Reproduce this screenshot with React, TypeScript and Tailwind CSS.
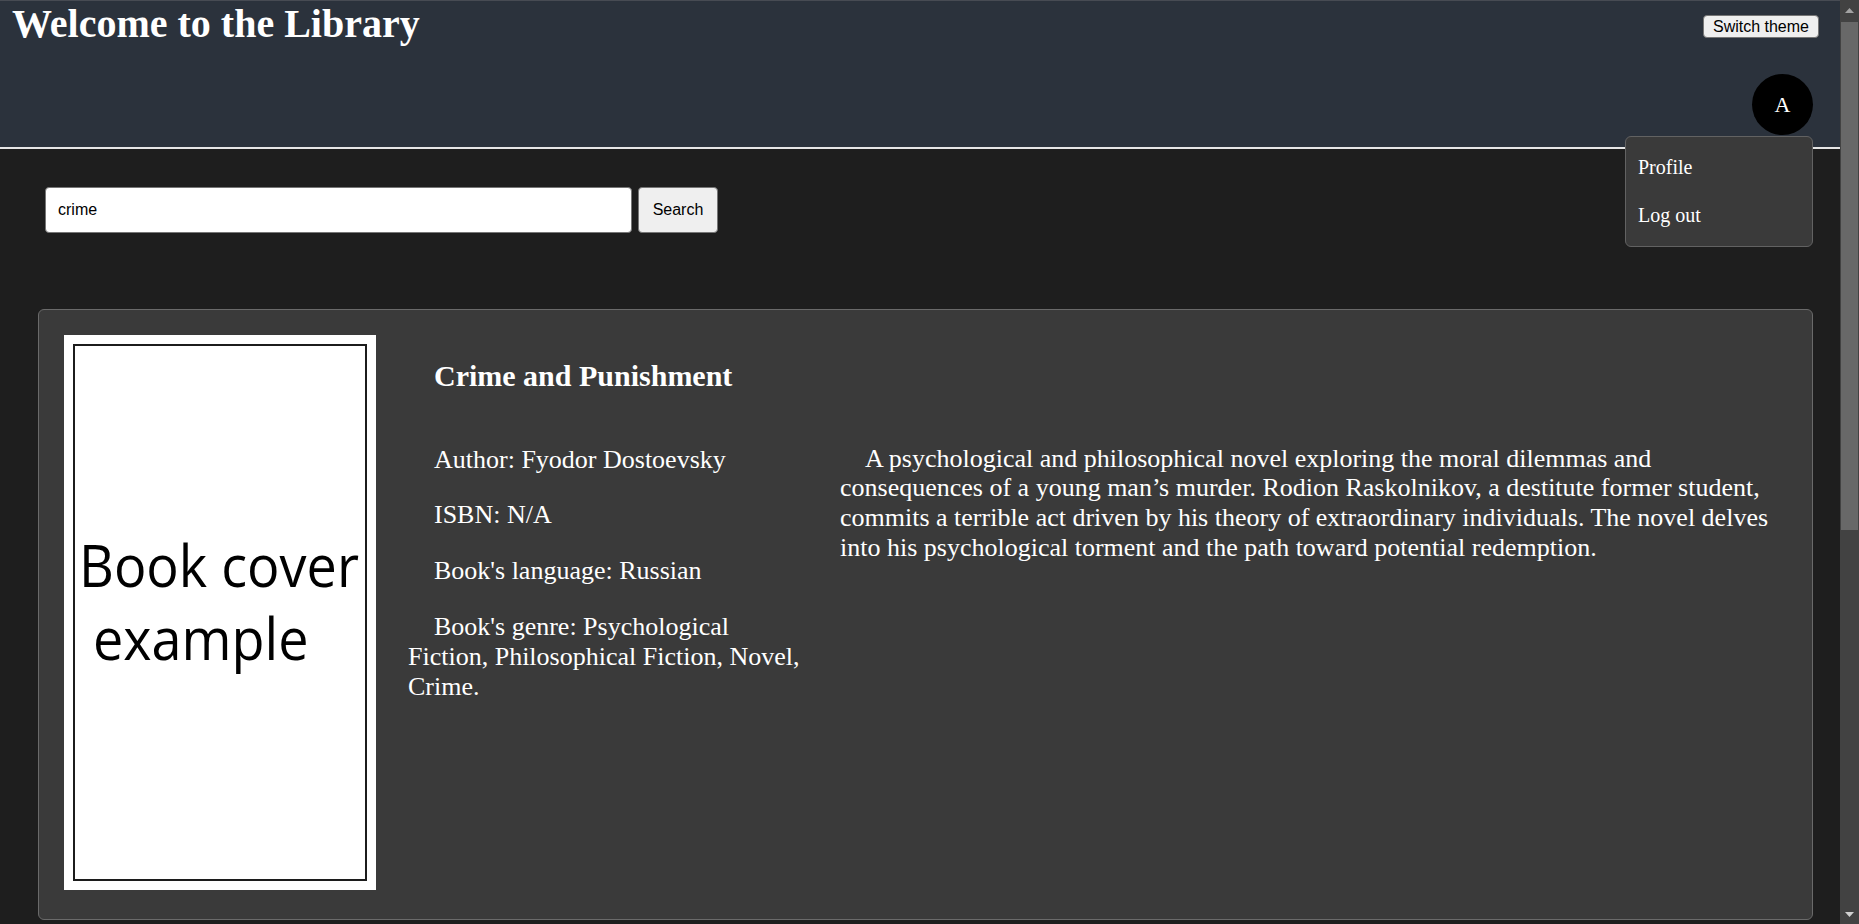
function ScrollBar() {
  return (
    <div className="flex w-[19px] shrink-0 flex-col bg-[#424242]">
      <div className="flex h-[20px] items-center justify-center">
        <svg width="9" height="5" viewBox="0 0 9 5">
          <path d="M0 5 L4.5 0 L9 5 Z" fill="#a3a3a3" />
        </svg>
      </div>
      <div className="mx-[1px] mt-[2px] h-[508px] bg-[#686868]" />
      <div className="flex-1" />
      <div className="flex h-[20px] items-center justify-center">
        <svg width="9" height="5" viewBox="0 0 9 5">
          <path d="M0 0 L9 0 L4.5 5 Z" fill="#d0d0d0" />
        </svg>
      </div>
    </div>
  );
}

export default function App() {
  return (
    <div className="flex h-screen overflow-hidden bg-[#1e1e1e] font-['Liberation_Serif','Times_New_Roman',serif] text-white">
      <div className="min-w-0 flex-1">
        <header className="relative z-10 flex h-[149px] items-start justify-between border-t border-b-2 border-t-[#474b53] border-b-[#e6e6e6] bg-[#2b323c]">
          <h1 className="pl-[12px] text-[40px] font-bold leading-[46px]">Welcome to the Library</h1>
          <div className="flex flex-col items-end pr-[21px] pt-[14px]">
            <button className="h-[23px] rounded-[4px] border border-[#767676] bg-[#efefef] px-[9px] font-['Liberation_Sans',Arial,sans-serif] text-[16px] leading-none text-black">
              Switch theme
            </button>
            <div className="relative mr-[6px] mt-[36px]">
              <div className="flex h-[61px] w-[61px] items-center justify-center rounded-full bg-black text-[22px]">A</div>
              <div className="absolute right-0 top-full mt-[1px] w-[188px] rounded-[6px] border border-[#626262] bg-[#3a3a3a] pb-[7px] pt-[6px] text-[20px]">
                <div className="px-[12px] py-[12px] leading-[24px]">Profile</div>
                <div className="px-[12px] py-[12px] leading-[24px]">Log out</div>
              </div>
            </div>
          </div>
        </header>

        <main className="pl-[38px] pr-[27px] pt-[38px]">
          <form className="ml-[7px] flex gap-[6px]" onSubmit={(e) => e.preventDefault()}>
            <input
              value="crime"
              readOnly
              className="h-[46px] w-[587px] rounded-[4px] border border-[#767676] bg-white px-[12px] font-['Liberation_Sans',Arial,sans-serif] text-[16px] text-black outline-none"
            />
            <button className="h-[46px] w-[80px] rounded-[4px] border border-[#767676] bg-[#efefef] font-['Liberation_Sans',Arial,sans-serif] text-[16px] text-black">
              Search
            </button>
          </form>

          <div className="mt-[76px] flex gap-[32px] rounded-[6px] border border-[#6a6a6a] bg-[#3a3a3a] px-[25px] pb-[29px] pt-[25px]">
            <div className="h-[555px] w-[312px] shrink-0 bg-white p-[9px]">
              <div className="flex h-full items-center overflow-hidden border-2 border-[#1c1c1c] pb-[24px] text-black">
                <div className="w-full origin-center scale-y-[1.1] font-['Open_Sans','Noto_Sans',sans-serif] text-[54px] leading-[67px]">
                  <div className="whitespace-nowrap pl-[4px]">Book cover</div>
                  <div className="whitespace-nowrap pl-[18px]">example</div>
                </div>
              </div>
            </div>

            <div className="flex flex-1 flex-col">
              <h3 className="mt-[24px] pl-[26px] text-[30px] font-bold leading-[34.5px]">Crime and Punishment</h3>
              <div className="mt-[50px] flex gap-[32px] text-[26px] leading-[1.15]">
                <div className="flex w-[400px] shrink-0 flex-col gap-[26px] pt-[1px]">
                  <p className="indent-[26px]">Author: Fyodor Dostoevsky</p>
                  <p className="indent-[26px]">ISBN: N/A</p>
                  <p className="indent-[26px]">Book's language: Russian</p>
                  <p className="indent-[26px]">Book's genre: Psychological Fiction, Philosophical Fiction, Novel, Crime.</p>
                </div>
                <p className="flex-1 indent-[25px]">
                  A psychological and philosophical novel exploring the moral dilemmas and consequences of a young man’s murder. Rodion Raskolnikov, a destitute former student, commits a terrible act driven by his theory of extraordinary individuals. The novel delves into his psychological torment and the path toward potential redemption.
                </p>
              </div>
            </div>
          </div>
        </main>
      </div>
      <ScrollBar />
    </div>
  );
}
